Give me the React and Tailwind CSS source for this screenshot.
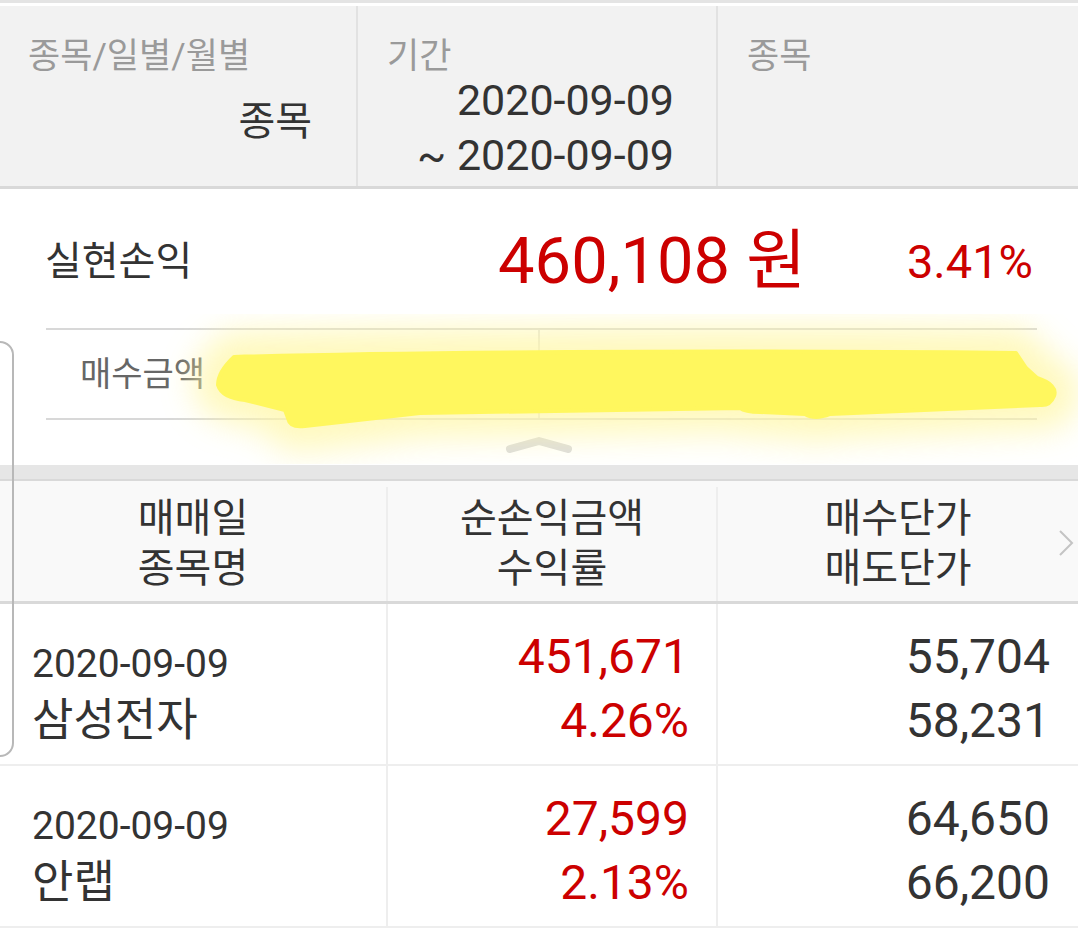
import React from 'react';

const trades = [
  { date: '2020-09-09', name: '삼성전자', profit: '451,671', rate: '4.26%', buy: '55,704', sell: '58,231' },
  { date: '2020-09-09', name: '안랩', profit: '27,599', rate: '2.13%', buy: '64,650', sell: '66,200' },
];

// 노란 형광펜 낙서 (가림 처리)
const Scribble = () => {
  const d =
    'M 234 357 C 400 352, 700 350, 1016 353 L 1026 368 L 1037 378 Q 1058 385 1054 396 Q 1050 406 1040 405 L 830 414 Q 815 420 805 414 L 760 412 Q 745 412 740 408 L 420 413 L 305 426 Q 290 428 288 418 L 285 410 L 245 400 Q 222 398 218 385 Q 218 372 234 357 Z';
  return (
    <svg className="absolute left-0 top-0 pointer-events-none" width="1078" height="480" viewBox="0 0 1078 480">
      <defs>
        <filter id="glow" x="-10%" y="-50%" width="120%" height="200%">
          <feGaussianBlur stdDeviation="16" />
        </filter>
      </defs>
      <path d={d} fill="#fff7a8" stroke="#fff7a8" strokeWidth="50" strokeLinejoin="round" opacity="0.75" filter="url(#glow)" />
      <path d={d} fill="#fff75e" stroke="#fff75e" strokeWidth="4" strokeLinejoin="round" />
    </svg>
  );
};

const App = () => {
  return (
    <div className="relative w-[1078px] h-[928px] overflow-hidden bg-white text-[#333] font-[Roboto,'Noto_Sans_CJK_KR',sans-serif]">
      {/* 상단 */}
      <div className="h-[3px] bg-[#e4e4e4]" />
      <div className="h-[3px] bg-white" />

      {/* 조회 조건 */}
      <div className="grid grid-cols-[358px_360px_1fr] h-[183px] bg-[#f2f2f2] border-b-[3px] border-[#d9d9d9]">
        <div className="border-r-2 border-[#e2e2e2] pt-[31px]">
          <div className="pl-[28px] text-[35px] leading-[40px] text-[#9a9a9a]">종목/일별/월별</div>
          <div className="mt-[20px] pr-[44px] text-right text-[40px] leading-[50px]">종목</div>
        </div>
        <div className="border-r-2 border-[#e2e2e2] pt-[31px]">
          <div className="pl-[29px] text-[35px] leading-[40px] text-[#9a9a9a]">기간</div>
          <div className="mt-[-4px] pr-[42px] text-right text-[43px] leading-[55px]">
            <div>2020-09-09</div>
            <div>~ 2020-09-09</div>
          </div>
        </div>
        <div className="pt-[31px]">
          <div className="pl-[29px] text-[35px] leading-[40px] text-[#9a9a9a]">종목</div>
        </div>
      </div>

      {/* 실현손익 */}
      <div className="h-[276px] pt-[33px]">
        <div className="flex items-center h-[80px] px-[45px]">
          <div className="flex-1 text-[40px]">실현손익</div>
          <div className="text-[65px] text-[#cc0000]">460,108 원</div>
          <div className="w-[227px] text-right text-[47px] text-[#cc0000]">3.41%</div>
        </div>
        <div className="ml-[46px] mr-[41px] mt-[26px] h-[92px] grid grid-cols-[494px_1fr] border-y-2 border-[#d8d8d8]">
          <div className="flex items-center pl-[34px] border-r-2 border-[#e2e2e2] text-[34px] text-[#666]">매수금액</div>
          <div />
        </div>
        <div className="flex justify-center mt-[16px]">
          <svg width="70" height="18" viewBox="0 0 70 18">
            <path d="M6 13 L35 5 L64 13" fill="none" stroke="#dcdcdc" strokeWidth="8" strokeLinecap="round" strokeLinejoin="round" />
          </svg>
        </div>
      </div>

      <div className="h-[16px] bg-[#e6e6e6] border-b-2 border-[#d9d9d9]" />

      {/* 표 헤더 */}
      <div className="relative grid grid-cols-[388px_330px_1fr] h-[123px] pt-[6px] bg-[#f9f9f9] border-b-[3px] border-[#d9d9d9] text-[40px] leading-[50px]">
        <div className="flex flex-col items-center justify-center border-r-2 border-[#eeeeee]">
          <div>매매일</div>
          <div>종목명</div>
        </div>
        <div className="flex flex-col items-center justify-center border-r-2 border-[#eeeeee]">
          <div>순손익금액</div>
          <div>수익률</div>
        </div>
        <div className="flex flex-col items-center justify-center">
          <div>매수단가</div>
          <div>매도단가</div>
        </div>
        <svg className="absolute right-[4px] top-[48px]" width="16" height="28" viewBox="0 0 16 28">
          <path d="M2 2 L14 14 L2 26" fill="none" stroke="#c4c4c4" strokeWidth="2" />
        </svg>
      </div>

      {/* 매매 내역 */}
      {trades.map((t, i) => (
        <div key={i} className="grid grid-cols-[388px_330px_1fr] h-[162px] border-b-2 border-[#eeeeee]">
          <div className="pl-[32px] pt-[32px] border-r-2 border-[#eeeeee]">
            <div className="text-[39px] leading-[56px]">{t.date}</div>
            <div className="text-[45px] leading-[58px]">{t.name}</div>
          </div>
          <div className="pr-[27px] pt-[21px] text-right text-[48px] leading-[64px] text-[#cc0000] border-r-2 border-[#eeeeee]">
            <div>{t.profit}</div>
            <div>{t.rate}</div>
          </div>
          <div className="pr-[28px] pt-[21px] text-right text-[48px] leading-[64px]">
            <div>{t.buy}</div>
            <div>{t.sell}</div>
          </div>
        </div>
      ))}

      <Scribble />

      {/* 왼쪽 플로팅 패널 가장자리 */}
      <div className="absolute left-[-22px] top-[341px] w-[36px] h-[416px] border-2 border-[#b8b8b8] rounded-[14px] pointer-events-none" />
    </div>
  );
};

export default App;
